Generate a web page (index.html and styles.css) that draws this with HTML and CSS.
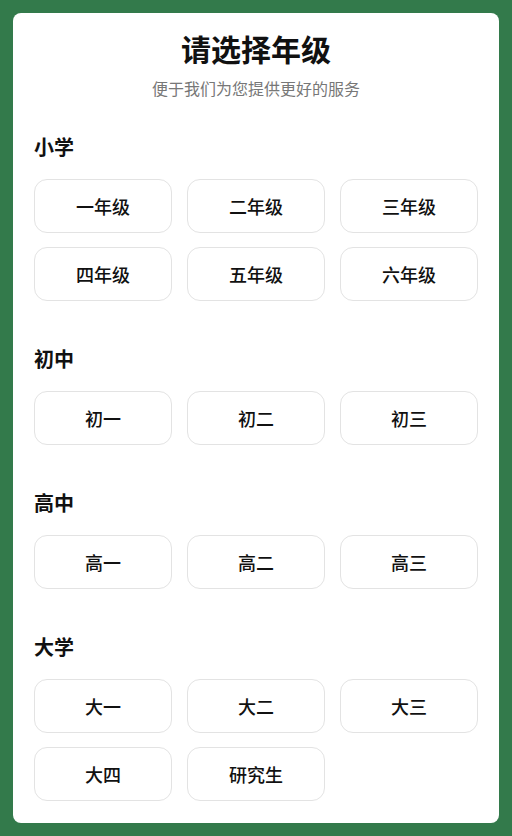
FILE: index.html
```html
<!DOCTYPE html>
<html lang="zh-CN">
<head>
  <meta charset="UTF-8">
  <meta name="viewport" content="width=device-width, initial-scale=1.0">
  <title>请选择年级</title>
  <link rel="stylesheet" href="styles.css">
</head>
<body>
  <div class="card">
    <h1>请选择年级</h1>
    <p class="subtitle">便于我们为您提供更好的服务</p>

    <div class="section">
      <h2>小学</h2>
      <div class="grid">
        <button class="grade">一年级</button>
        <button class="grade">二年级</button>
        <button class="grade">三年级</button>
        <button class="grade">四年级</button>
        <button class="grade">五年级</button>
        <button class="grade">六年级</button>
      </div>
    </div>

    <div class="section">
      <h2>初中</h2>
      <div class="grid">
        <button class="grade">初一</button>
        <button class="grade">初二</button>
        <button class="grade">初三</button>
      </div>
    </div>

    <div class="section">
      <h2>高中</h2>
      <div class="grid">
        <button class="grade">高一</button>
        <button class="grade">高二</button>
        <button class="grade">高三</button>
      </div>
    </div>

    <div class="section">
      <h2>大学</h2>
      <div class="grid">
        <button class="grade">大一</button>
        <button class="grade">大二</button>
        <button class="grade">大三</button>
        <button class="grade">大四</button>
        <button class="grade">研究生</button>
      </div>
    </div>
  </div>
</body>
</html>
```

FILE: styles.css
```css
html, body {
  margin: 0;
  padding: 0;
}
body {
  background-color: #337a4b;
  font-family: "Noto Sans CJK SC", "Noto Sans", sans-serif;
  padding: 13px;
  height: 836px;
  box-sizing: border-box;
}
.card {
  background-color: #fff;
  border-radius: 8px;
  padding: 17px 21px 22px;
  height: 810px;
  box-sizing: border-box;
}
h1 {
  margin: 0;
  text-align: center;
  font-size: 30px;
  line-height: 36px;
  font-weight: 700;
  color: #111;
}
.subtitle {
  margin: 12px 0 0;
  text-align: center;
  font-size: 16px;
  line-height: 20px;
  color: #777;
}
.section {
  margin-top: 36px;
}
.section + .section {
  margin-top: 45px;
}
h2 {
  margin: 0 0 19px;
  font-size: 20px;
  line-height: 26px;
  font-weight: 700;
  color: #111;
}
.grid {
  display: grid;
  grid-template-columns: repeat(3, 1fr);
  column-gap: 15px;
  row-gap: 14px;
}
.grade {
  height: 54px;
  background-color: #fff;
  border: 1px solid #e3e3e3;
  border-radius: 13px;
  font-family: "Noto Sans CJK SC Medium", "Noto Sans CJK SC", sans-serif;
  font-size: 18px;
  font-weight: 500;
  color: #111;
  padding: 0;
}
```
